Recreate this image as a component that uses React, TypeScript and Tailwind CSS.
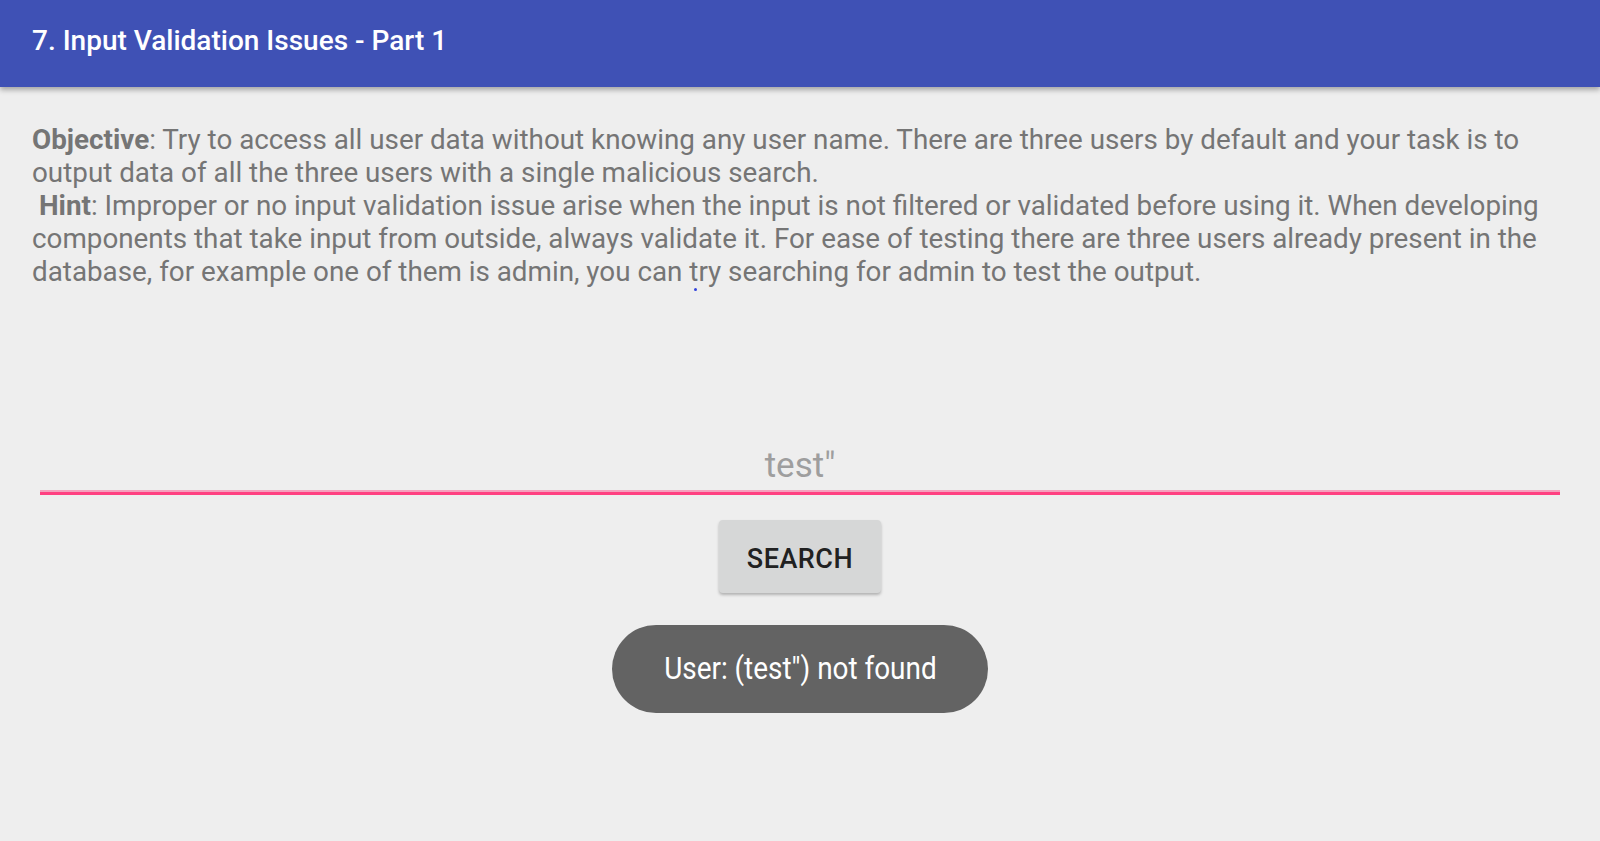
import React from 'react';

const App = () => {
  return (
    <div className="min-h-[841px] w-full bg-[#eeeeee] relative" style={{ fontFamily: 'Roboto, "Noto Sans", sans-serif' }}>
      {/* toolbar */}
      <header className="h-[87px] bg-[#3f51b5] flex items-center px-[32px] shadow-[0_3px_5px_rgba(0,0,0,0.3)] relative z-10">
        <h1 className="text-white text-[28px] font-medium -mt-[5px]">7. Input Validation Issues - Part 1</h1>
      </header>

      <main className="px-[32px] pt-[36px]">
        <p className="text-[#757575] text-[27.8px] leading-[33px]">
          <b className="font-bold">Objective</b>: Try to access all user data without knowing any user name. There are three users by default and your task is to output data of all the three users with a single malicious search.
          <br />
          &nbsp;<b className="font-bold">Hint</b>: Improper or no input validation issue arise when the input is not filtered or validated before using it. When developing components that take input from outside, always validate it. For ease of testing there are three users already present in the database, for example one of them is admin, you can try searching for admin to test the output.
        </p>

        <div className="mt-[157px] mx-[8px]">
          <div className="text-center text-[#9e9e9e] text-[35px] leading-[42px] pb-[3px]">test"</div>
          <div className="h-[2px] bg-[#f4a0bd]" />
          <div className="h-[3px] bg-[#ff4081]" />
        </div>

        <div className="flex justify-center mt-[25px]">
          <button className="w-[162px] h-[73px] pt-[5px] bg-[#d6d7d7] rounded-[4px] shadow-[0_2px_3px_rgba(0,0,0,0.25)] text-[#212121] text-[27px] font-medium tracking-[0.5px]">
            SEARCH
          </button>
        </div>

        <div className="flex justify-center mt-[32px]">
          <div className="w-[376px] h-[88px] rounded-full bg-[#636363] flex items-center justify-center">
            <span className="text-white text-[31px] scale-x-[0.9] whitespace-nowrap">User: (test") not found</span>
          </div>
        </div>
      </main>

      {/* touch dot */}
      <div className="absolute left-[694px] top-[288px] w-[3px] h-[3px] rounded-full bg-[#3344dd]" />
    </div>
  );
};

export default App;
